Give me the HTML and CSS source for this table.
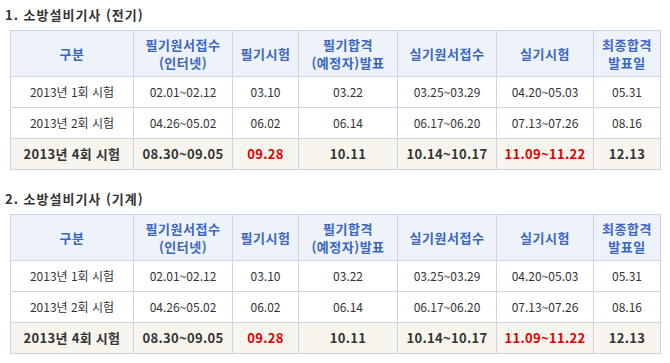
FILE: index.html
```html
<!DOCTYPE html>
<html lang="ko">
<head>
<meta charset="utf-8">
<link rel="stylesheet" href="styles.css">
</head>
<body>
<div class="page">
  <section class="sec">
    <h3 class="title">1. 소방설비기사 (전기)</h3>
    <table class="sched">
      <colgroup>
        <col class="c1"><col class="c2"><col class="c3"><col class="c4"><col class="c5"><col class="c6"><col class="c7">
      </colgroup>
      <thead>
        <tr><th>구분</th><th>필기원서접수<br>(인터넷)</th><th>필기시험</th><th>필기합격<br>(예정자)발표</th><th>실기원서접수</th><th>실기시험</th><th>최종합격<br>발표일</th></tr>
      </thead>
      <tbody>
        <tr><td>2013년 1회 시험</td><td>02.01~02.12</td><td>03.10</td><td>03.22</td><td>03.25~03.29</td><td>04.20~05.03</td><td>05.31</td></tr>
        <tr><td>2013년 2회 시험</td><td>04.26~05.02</td><td>06.02</td><td>06.14</td><td>06.17~06.20</td><td>07.13~07.26</td><td>08.16</td></tr>
        <tr class="cur"><td>2013년 4회 시험</td><td>08.30~09.05</td><td class="red">09.28</td><td>10.11</td><td>10.14~10.17</td><td class="red">11.09~11.22</td><td>12.13</td></tr>
      </tbody>
    </table>
  </section>
  <section class="sec sec2">
    <h3 class="title">2. 소방설비기사 (기계)</h3>
    <table class="sched">
      <colgroup>
        <col class="c1"><col class="c2"><col class="c3"><col class="c4"><col class="c5"><col class="c6"><col class="c7">
      </colgroup>
      <thead>
        <tr><th>구분</th><th>필기원서접수<br>(인터넷)</th><th>필기시험</th><th>필기합격<br>(예정자)발표</th><th>실기원서접수</th><th>실기시험</th><th>최종합격<br>발표일</th></tr>
      </thead>
      <tbody>
        <tr><td>2013년 1회 시험</td><td>02.01~02.12</td><td>03.10</td><td>03.22</td><td>03.25~03.29</td><td>04.20~05.03</td><td>05.31</td></tr>
        <tr><td>2013년 2회 시험</td><td>04.26~05.02</td><td>06.02</td><td>06.14</td><td>06.17~06.20</td><td>07.13~07.26</td><td>08.16</td></tr>
        <tr class="cur"><td>2013년 4회 시험</td><td>08.30~09.05</td><td class="red">09.28</td><td>10.11</td><td>10.14~10.17</td><td class="red">11.09~11.22</td><td>12.13</td></tr>
      </tbody>
    </table>
  </section>
</div>
</body>
</html>
```
FILE: styles.css
```css
html, body {
  margin: 0;
  padding: 0;
  background: #fff;
}
body {
  font-family: "Noto Sans CJK KR", "Noto Sans", sans-serif;
  font-size: 12px;
  color: #333;
}
.page {
  padding: 0 0 0 10px;
}
.sec2 {
  margin-top: 14px;
}
.title {
  margin: 0 0 0 -5px;
  padding: 5px 0;
  height: 20px;
  line-height: 20px;
  font-size: 13px;
  font-weight: bold;
  color: #333;
  letter-spacing: 1px;
}
.sched {
  border-collapse: collapse;
  table-layout: fixed;
  width: 650px;
  text-align: center;
}
.c1 { width: 123px; }
.c2 { width: 99px; }
.c3 { width: 66px; }
.c4 { width: 99px; }
.c5 { width: 99px; }
.c6 { width: 97px; }
.c7 { width: 67px; }
.sched th, .sched td {
  border: 1px solid #cbd4e6;
  padding: 0;
  text-align: center;
}
.sched th {
  height: 45px;
  background: #eef3fb;
  color: #3a66c2;
  font-weight: bold;
  font-size: 13px;
  line-height: 18px;
  letter-spacing: 0.5px;
}
.sched td {
  height: 30px;
  line-height: 16px;
  color: #333;
}
.sched tr.cur td {
  background: #f7f5ee;
  font-weight: bold;
  font-size: 13px;
  letter-spacing: 0.3px;
}
.sched tr.cur td.red {
  color: #e00000;
}
```
